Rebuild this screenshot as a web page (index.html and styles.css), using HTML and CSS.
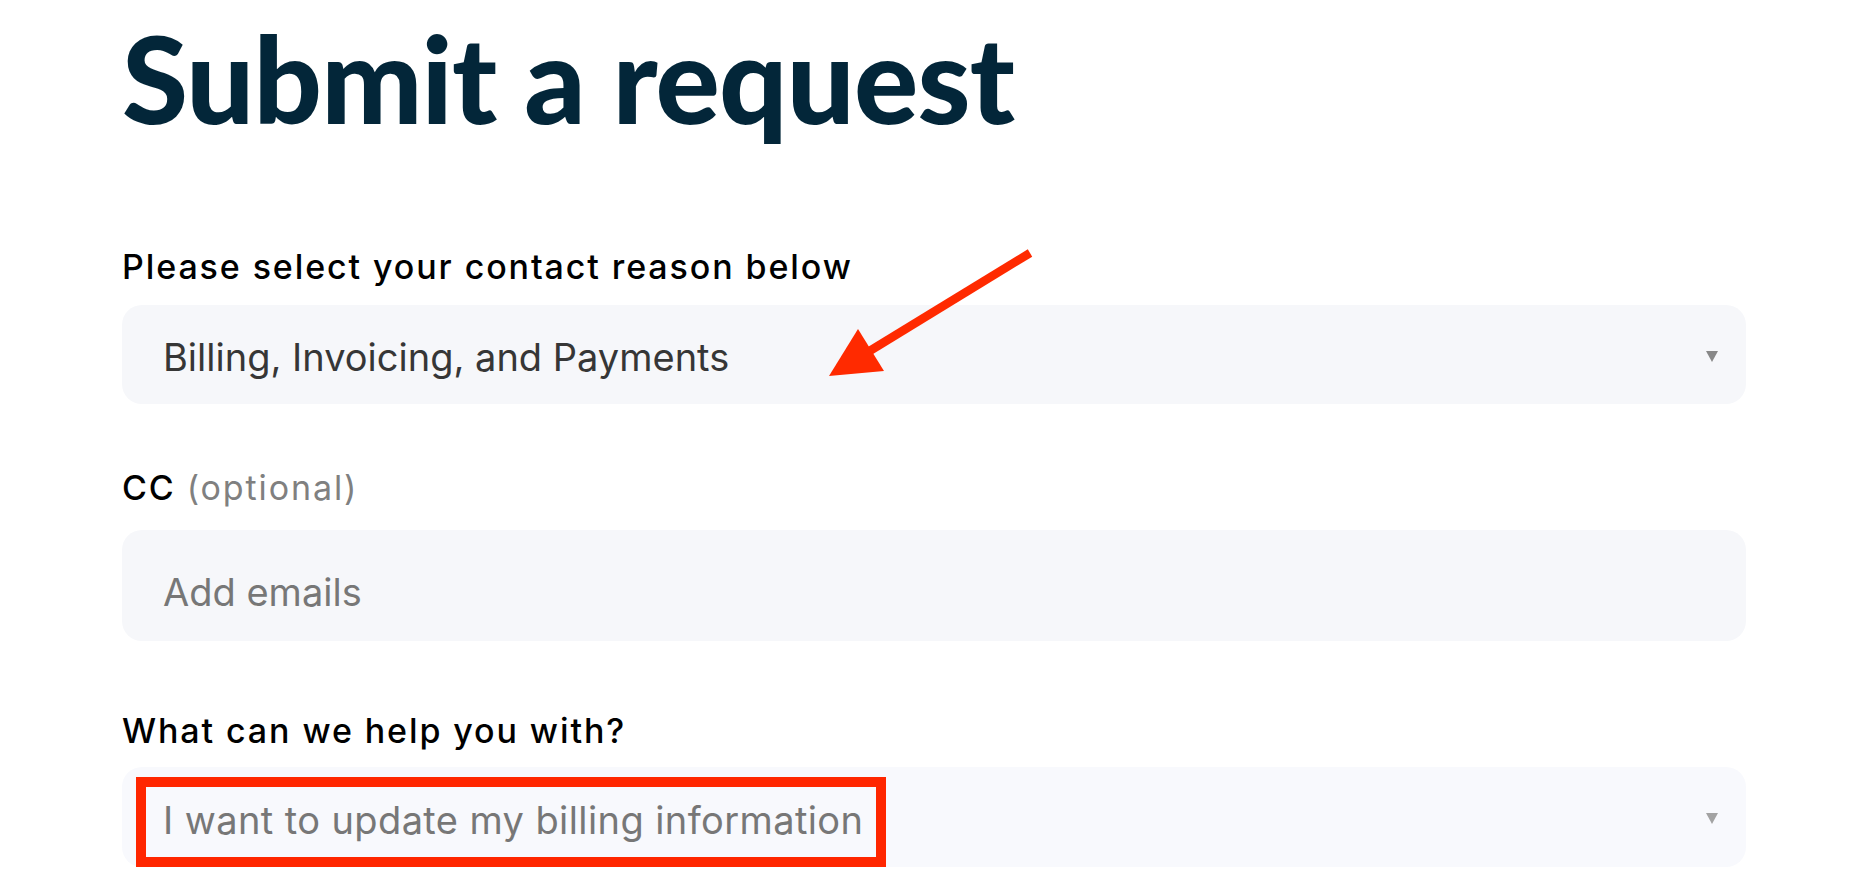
FILE: index.html
```html
<!DOCTYPE html>
<html lang="en">
<head>
<meta charset="utf-8">
<title>Submit a request</title>
<link rel="stylesheet" href="styles.css">
</head>
<body>
<main class="page">
  <h1 class="title">Submit a request</h1>
  <form class="form">
    <div class="field field--reason">
      <label class="label">Please select your contact reason below</label>
      <div class="control control--reason">
        <span class="value value--reason">Billing, Invoicing, and Payments</span>
        <span class="caret caret--dark"></span>
      </div>
    </div>
    <div class="field field--cc">
      <label class="label">CC <span class="label-hint">(optional)</span></label>
      <div class="control control--cc">
        <span class="value value--placeholder value--cc">Add emails</span>
      </div>
    </div>
    <div class="field field--help">
      <label class="label">What can we help you with?</label>
      <div class="control control--help">
        <span class="value value--placeholder value--help">I want to update my billing information</span>
        <span class="caret caret--light"></span>
        <span class="highlight-box"></span>
      </div>
    </div>
  </form>
  <svg class="annotation-arrow" width="220" height="145" viewBox="0 0 220 145" aria-hidden="true">
    <line x1="210" y1="13" x2="48" y2="112" stroke="#ff2a00" stroke-width="8.5"/>
    <polygon points="9,136 38,89 64,131" fill="#ff2a00"/>
  </svg>
</main>
</body>
</html>
```
FILE: styles.css
```css
* { box-sizing: border-box; }

html, body {
  margin: 0;
  background: #ffffff;
}

body {
  font-family: Inter, "Noto Sans", "Liberation Sans", sans-serif;
}

.page {
  position: relative;
  width: 1746px;
  padding: 8px 0 0 122px;
}

.title {
  margin: 0;
  font-family: Lato, Inter, sans-serif;
  font-size: 120px;
  line-height: 140px;
  font-weight: 900;
  letter-spacing: -0.8px;
  color: #032639;
}

.form {
  display: flex;
  flex-direction: column;
  margin-top: 101px;
}

.field {
  display: flex;
  flex-direction: column;
}

.field--cc { margin-top: 66px; }
.field--help { margin-top: 72px; }

.label {
  font-size: 34px;
  line-height: 36px;
  font-weight: 500;
  letter-spacing: 1.9px;
  color: #000000;
}

.label-hint {
  color: #808080;
  font-weight: 400;
}

.control {
  position: relative;
  display: flex;
  align-items: center;
  padding: 0 28px 0 41px;
  border-radius: 20px;
  background: #f6f7fa;
}

.control--reason { margin-top: 20px; height: 99px; }
.control--cc { margin-top: 24px; height: 111px; }
.control--help { margin-top: 18px; height: 100px; background: #f8f9fd; }

.value {
  font-size: 38px;
  line-height: 38px;
  font-weight: 400;
  color: #363636;
}

.value--placeholder { color: #777777; }

.value--reason { margin-top: 5px; }
.value--cc { margin-top: 13px; }
.value--help { margin-top: 6px; letter-spacing: 0.4px; }

.caret {
  margin-left: auto;
  width: 0;
  height: 0;
  border-left: 6px solid transparent;
  border-right: 6px solid transparent;
  border-top: 11px solid #888888;
}

.caret--dark { margin-top: 4px; }
.caret--light { margin-top: 2px; border-top-color: #a3a3a3; }

.highlight-box {
  position: absolute;
  left: 14px;
  top: 10px;
  width: 750px;
  height: 90px;
  border: 10px solid #ff2600;
}

.annotation-arrow {
  position: absolute;
  left: 820px;
  top: 240px;
}
```
